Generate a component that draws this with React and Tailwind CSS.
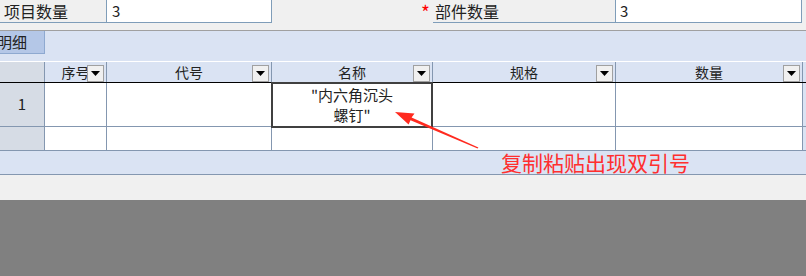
const grid = "border-[#8497b0]";

const DropBtn = () => (
    <span className="absolute right-[2px] bottom-0 w-[17px] h-[17px] bg-[#f0f0f0] border border-[#a0a0a0] flex items-center justify-center">
        <svg width="9" height="5" viewBox="0 0 9 5"><polygon points="0,0 9,0 4.5,5" fill="#000" /></svg>
    </span>
);

const cols = [
    { name: "序号", w: "w-[62px]" },
    { name: "代号", w: "w-[165px]" },
    { name: "名称", w: "w-[161px]" },
    { name: "规格", w: "w-[183px]" },
    { name: "数量", w: "w-[187px]" },
];

const App = () => {
    return (
        <div className="relative w-[806px] h-[276px] overflow-hidden bg-[#808080] text-[#222]" style={{ fontFamily: '"Noto Sans CJK SC", "Noto Sans", sans-serif' }}>
            {/* top form */}
            <div className="h-[31px] bg-[#f0f0f0] border-b border-[#a0a0a0] flex items-start">
                <div className="w-[106px] h-[23px] border-b border-[#7f9db9] text-[16px] leading-[22px] pl-[4px]">项目数量</div>
                <div className="w-[166px] h-[23px] bg-white border-x border-b border-[#7f9db9] text-[15px] leading-[22px] pl-[5px]">3</div>
                <div className="w-[149px]" />
                <div className="w-[12px] h-[23px] text-[#ff0000] text-[19px] leading-[24px]">*</div>
                <div className="w-[182px] h-[23px] border-b border-[#7f9db9] text-[16px] leading-[22px] pl-[2px]">部件数量</div>
                <div className="w-[187px] h-[23px] bg-white border-x border-b border-[#7f9db9] text-[15px] leading-[22px] pl-[4px]">3</div>
            </div>

            {/* detail panel */}
            <div className="bg-[#dae3f3]">
                <div className="h-[30px]">
                    <div className="w-[45px] h-[23px] bg-[#b4c7e7] border-r border-b border-[#8ea9d0] text-[15px] leading-[22px] overflow-hidden">
                        <span className="block -ml-[3px]">明细</span>
                    </div>
                </div>

                <div className="relative">
                    {/* header */}
                    <div className="flex h-[22px] border-t border-white border-b border-b-black">
                        <div className="w-[45px] bg-[#d6dce5] border-r border-[#8497b0]" />
                        {cols.map((c) => (
                            <div key={c.name} className={`${c.w} relative border-r ${grid} text-[14px] leading-[21px] text-center`}>
                                {c.name}
                                <DropBtn />
                            </div>
                        ))}
                        <div className="flex-1" />
                    </div>

                    {/* row 1 */}
                    <div className={`flex h-[44px] bg-white border-b ${grid}`}>
                        <div className={`w-[45px] bg-[#d6dce5] border-r ${grid} text-[15px] flex items-center justify-center`}>1</div>
                        {cols.map((c) => (
                            <div key={c.name} className={`${c.w} border-r ${grid}`} />
                        ))}
                        <div className="flex-1 bg-[#dae3f3]" />
                    </div>

                    {/* row 2 */}
                    <div className={`flex h-[24px] bg-white border-b ${grid}`}>
                        <div className={`w-[45px] bg-[#d6dce5] border-r ${grid}`} />
                        {cols.map((c) => (
                            <div key={c.name} className={`${c.w} border-r ${grid}`} />
                        ))}
                        <div className="flex-1 bg-[#dae3f3]" />
                    </div>

                    {/* selected cell */}
                    <div className="absolute left-[271px] top-[21px] w-[162px] h-[46px] border-2 border-[#404040] text-[15px] leading-[20px] text-center pt-[1px]">
                        "内六角沉头<br />螺钉"
                    </div>
                </div>

                <div className="h-[23px]" />
            </div>
            <div className={`h-[26px] bg-[#f0f0f0] border-t ${grid}`} />

            {/* annotation */}
            <svg className="absolute left-0 top-0" width="806" height="276">
                <polygon points="395,112 414.5,113.5 411.6,117.6 478.4,147.4 477.6,148.6 410.5,120.3 408.6,124.6" fill="#ff2a1f" />
            </svg>
            <div className="absolute left-[501px] top-[148px] text-[21px] leading-[28px] text-[#ff2f2f] whitespace-nowrap">复制粘贴出现双引号</div>
        </div>
    );
};

export default App;
